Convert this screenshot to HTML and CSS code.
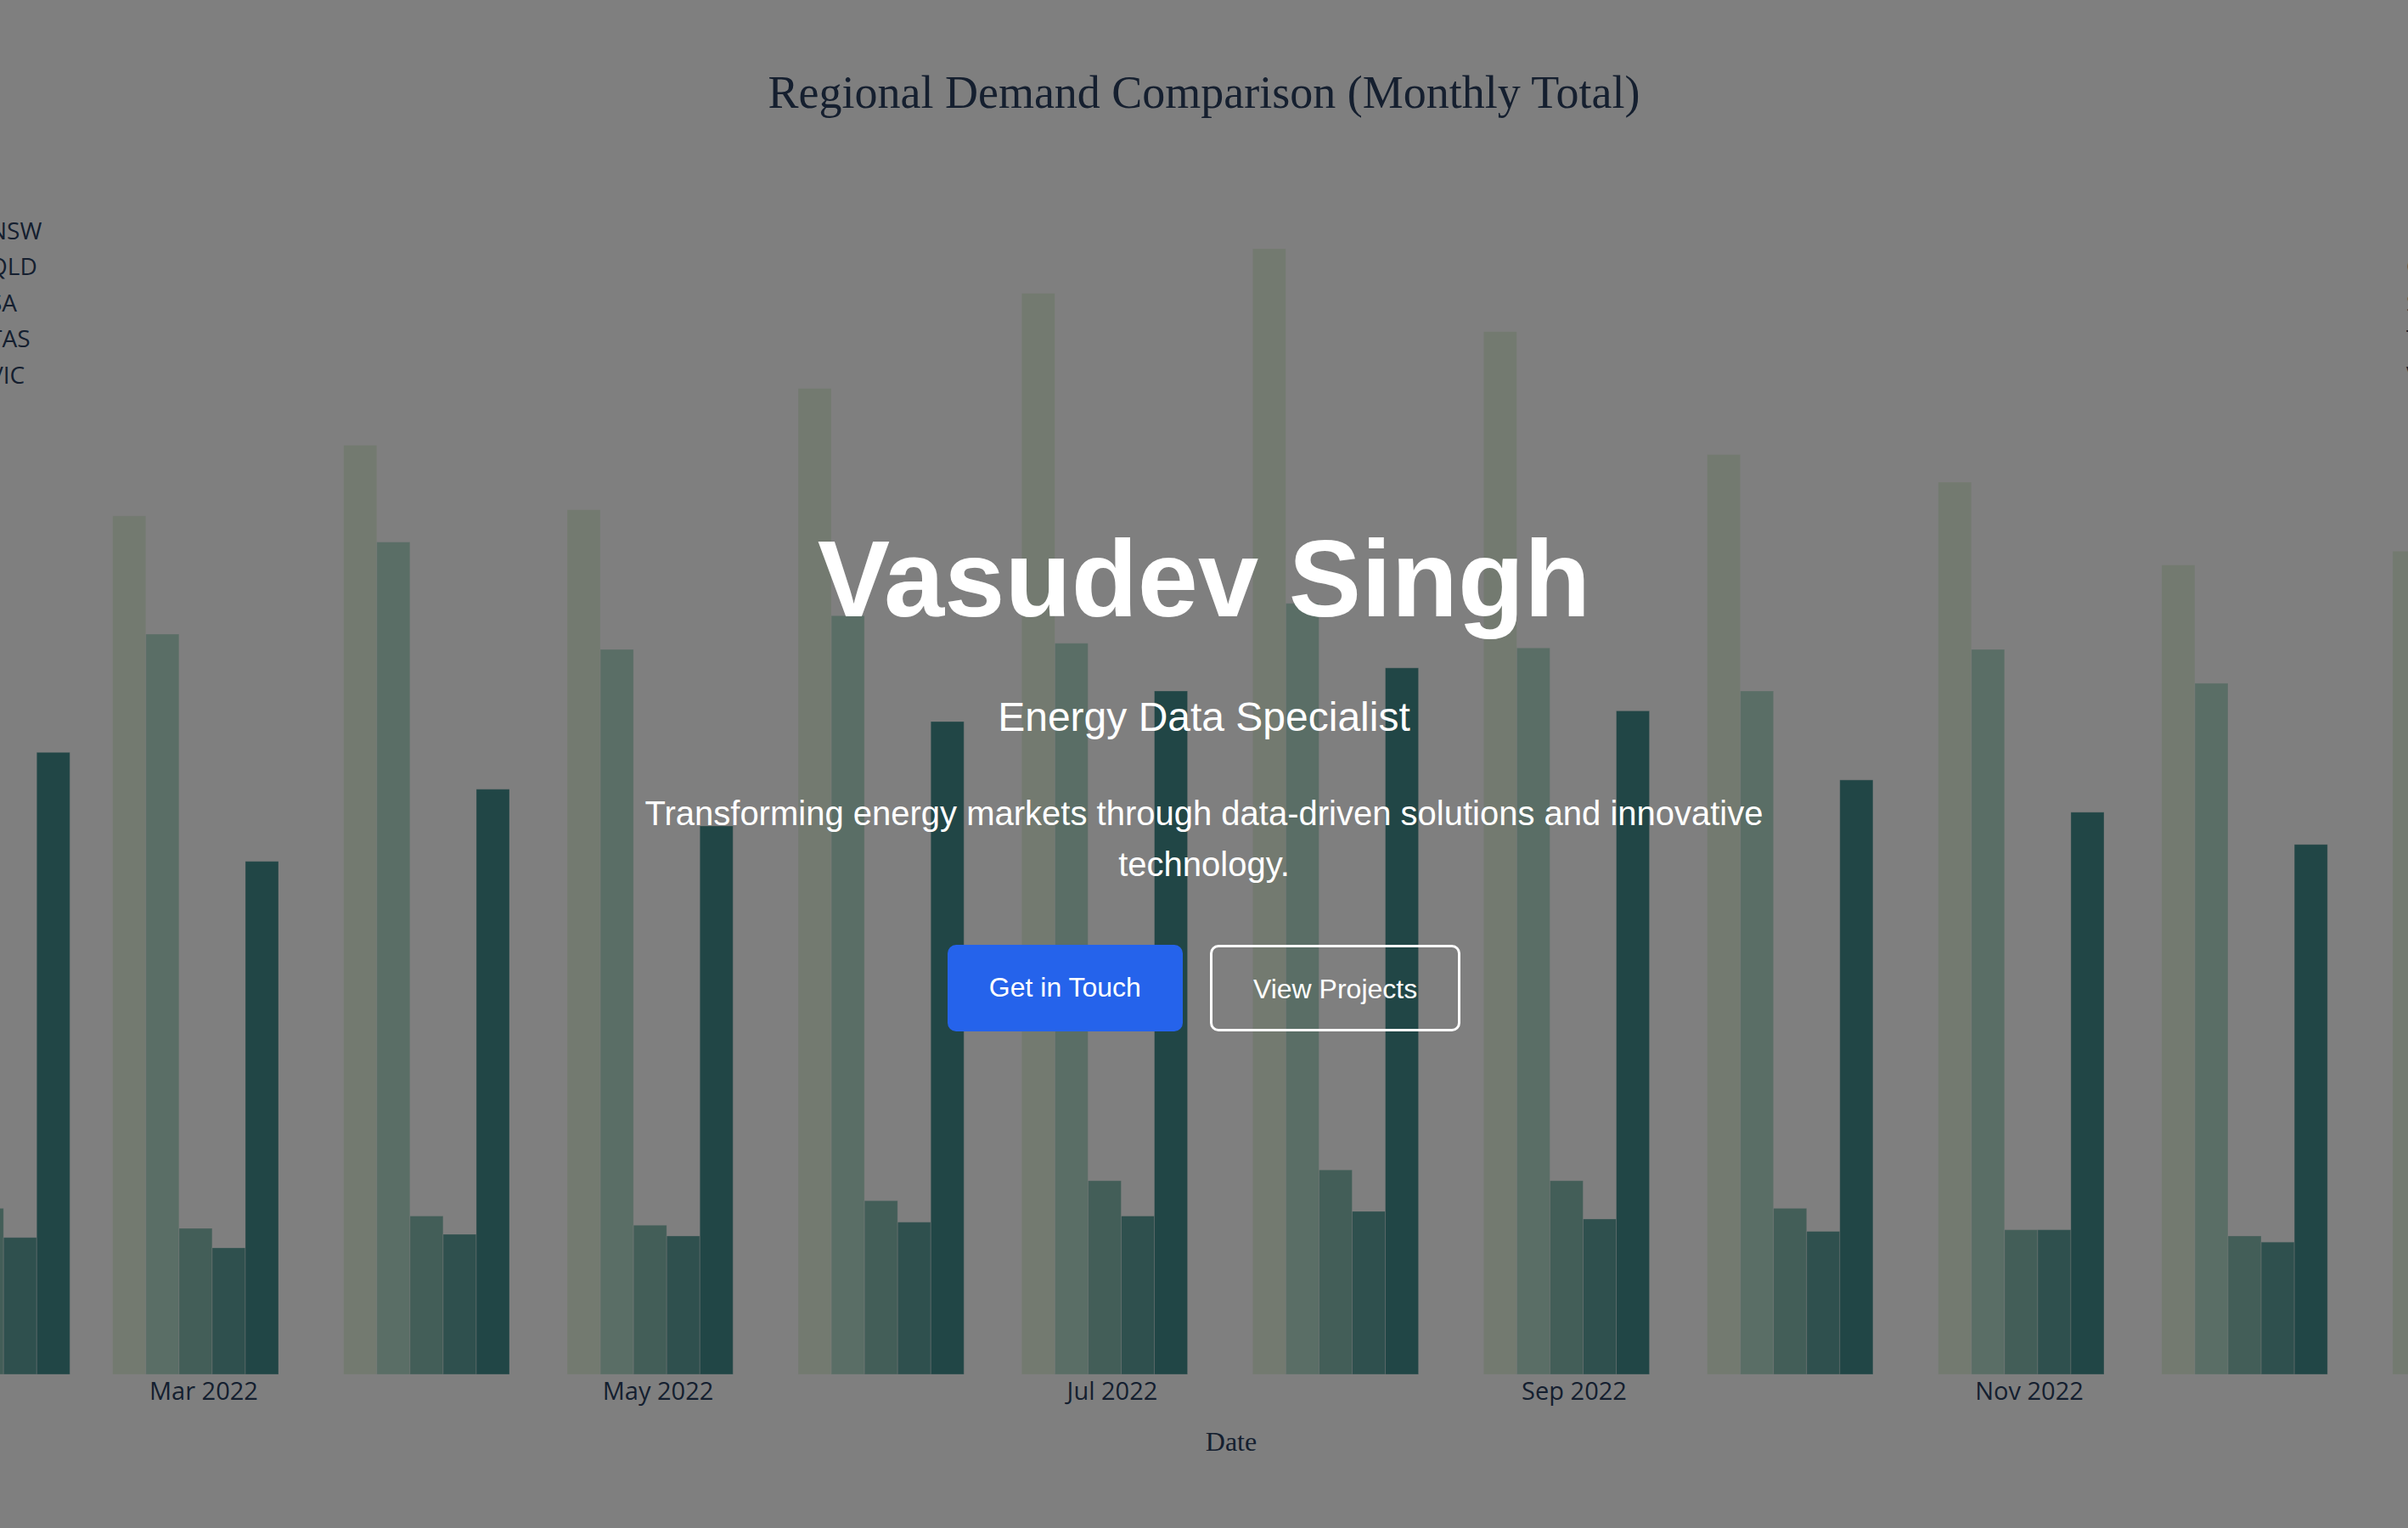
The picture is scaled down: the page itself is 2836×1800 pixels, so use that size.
FILE: index.html
```html
<!DOCTYPE html>
<html lang="en">
<head>
<meta charset="utf-8">
<title>Vasudev Singh</title>
<link rel="stylesheet" href="styles.css">
</head>
<body>
<section class="hero">
  <div class="hero-chart">
    <svg class="chart" width="2836" height="1800" viewBox="0 0 2836 1800" xmlns="http://www.w3.org/2000/svg">
      <text class="chart-title" x="1418" y="127">Regional Demand Comparison (Monthly Total)</text>

      <g class="legend">
        <text x="-13" y="282">NSW</text>
        <text x="-13" y="324">QLD</text>
        <text x="-13" y="367">SA</text>
        <text x="-13" y="409">TAS</text>
        <text x="-13" y="452">VIC</text>
      </g>
      <g class="legend">
        <text x="2834" y="282">NSW</text>
        <text x="2834" y="324">QLD</text>
        <text x="2834" y="367">SA</text>
        <text x="2834" y="409">TAS</text>
        <text x="2834" y="452">VIC</text>
      </g>

      <g class="bars">
        <g transform="translate(-113 0)">
          <rect class="b1" x="0" y="619" width="39.06" height="1000"/>
          <rect class="b2" x="39.06" y="739" width="39.06" height="880"/>
          <rect class="b3" x="78.12" y="1423.4" width="39.06" height="195.6"/>
          <rect class="b4" x="117.18" y="1457.8" width="39.06" height="161.2"/>
          <rect class="b5" x="156.24" y="886.3" width="39.06" height="732.7"/>
        </g>
        <g transform="translate(132.7 0)">
          <rect class="b1" x="0" y="607.7" width="39.06" height="1011.3"/>
          <rect class="b2" x="39.06" y="747" width="39.06" height="872"/>
          <rect class="b3" x="78.12" y="1447" width="39.06" height="172"/>
          <rect class="b4" x="117.18" y="1470" width="39.06" height="149"/>
          <rect class="b5" x="156.24" y="1014.7" width="39.06" height="604.3"/>
        </g>
        <g transform="translate(404.7 0)">
          <rect class="b1" x="0" y="524.5" width="39.06" height="1094.5"/>
          <rect class="b2" x="39.06" y="638.5" width="39.06" height="980.5"/>
          <rect class="b3" x="78.12" y="1432.5" width="39.06" height="186.5"/>
          <rect class="b4" x="117.18" y="1454" width="39.06" height="165"/>
          <rect class="b5" x="156.24" y="929.7" width="39.06" height="689.3"/>
        </g>
        <g transform="translate(668 0)">
          <rect class="b1" x="0" y="600.5" width="39.06" height="1018.5"/>
          <rect class="b2" x="39.06" y="765" width="39.06" height="854"/>
          <rect class="b3" x="78.12" y="1443.3" width="39.06" height="175.7"/>
          <rect class="b4" x="117.18" y="1456" width="39.06" height="163"/>
          <rect class="b5" x="156.24" y="973" width="39.06" height="646"/>
        </g>
        <g transform="translate(940 0)">
          <rect class="b1" x="0" y="457.6" width="39.06" height="1161.4"/>
          <rect class="b2" x="39.06" y="725.3" width="39.06" height="893.7"/>
          <rect class="b3" x="78.12" y="1414.4" width="39.06" height="204.6"/>
          <rect class="b4" x="117.18" y="1439.7" width="39.06" height="179.3"/>
          <rect class="b5" x="156.24" y="850" width="39.06" height="769"/>
        </g>
        <g transform="translate(1203.3 0)">
          <rect class="b1" x="0" y="345.5" width="39.06" height="1273.5"/>
          <rect class="b2" x="39.06" y="757.8" width="39.06" height="861.2"/>
          <rect class="b3" x="78.12" y="1390.9" width="39.06" height="228.1"/>
          <rect class="b4" x="117.18" y="1432.5" width="39.06" height="186.5"/>
          <rect class="b5" x="156.24" y="814" width="39.06" height="805"/>
        </g>
        <g transform="translate(1475.3 0)">
          <rect class="b1" x="0" y="293" width="39.06" height="1326"/>
          <rect class="b2" x="39.06" y="710.8" width="39.06" height="908.2"/>
          <rect class="b3" x="78.12" y="1378.2" width="39.06" height="240.8"/>
          <rect class="b4" x="117.18" y="1427" width="39.06" height="192"/>
          <rect class="b5" x="156.24" y="786.8" width="39.06" height="832.2"/>
        </g>
        <g transform="translate(1747.3 0)">
          <rect class="b1" x="0" y="390.7" width="39.06" height="1228.3"/>
          <rect class="b2" x="39.06" y="763.3" width="39.06" height="855.7"/>
          <rect class="b3" x="78.12" y="1390.9" width="39.06" height="228.1"/>
          <rect class="b4" x="117.18" y="1436" width="39.06" height="183"/>
          <rect class="b5" x="156.24" y="837.4" width="39.06" height="781.6"/>
        </g>
        <g transform="translate(2010.6 0)">
          <rect class="b1" x="0" y="535.4" width="39.06" height="1083.6"/>
          <rect class="b2" x="39.06" y="814" width="39.06" height="805"/>
          <rect class="b3" x="78.12" y="1423.4" width="39.06" height="195.6"/>
          <rect class="b4" x="117.18" y="1450.6" width="39.06" height="168.4"/>
          <rect class="b5" x="156.24" y="918.8" width="39.06" height="700.2"/>
        </g>
        <g transform="translate(2282.7 0)">
          <rect class="b1" x="0" y="568" width="39.06" height="1051"/>
          <rect class="b2" x="39.06" y="765" width="39.06" height="854"/>
          <rect class="b3" x="78.12" y="1448.7" width="39.06" height="170.3"/>
          <rect class="b4" x="117.18" y="1448.7" width="39.06" height="170.3"/>
          <rect class="b5" x="156.24" y="956.8" width="39.06" height="662.2"/>
        </g>
        <g transform="translate(2545.9 0)">
          <rect class="b1" x="0" y="665.6" width="39.06" height="953.4"/>
          <rect class="b2" x="39.06" y="804.9" width="39.06" height="814.1"/>
          <rect class="b3" x="78.12" y="1456" width="39.06" height="163"/>
          <rect class="b4" x="117.18" y="1463.2" width="39.06" height="155.8"/>
          <rect class="b5" x="156.24" y="994.8" width="39.06" height="624.2"/>
        </g>
        <g transform="translate(2817.9 0)">
          <rect class="b1" x="0" y="649.3" width="39.06" height="969.7"/>
          <rect class="b2" x="39.06" y="790" width="39.06" height="829"/>
          <rect class="b3" x="78.12" y="1440" width="39.06" height="179"/>
          <rect class="b4" x="117.18" y="1455" width="39.06" height="164"/>
          <rect class="b5" x="156.24" y="980" width="39.06" height="639"/>
        </g>
      </g>

      <g class="ticks">
        <text x="240" y="1649">Mar 2022</text>
        <text x="775" y="1649">May 2022</text>
        <text x="1310" y="1649">Jul 2022</text>
        <text x="1854" y="1649">Sep 2022</text>
        <text x="2390" y="1649">Nov 2022</text>
      </g>
      <text class="axis-title" x="1450" y="1709">Date</text>
    </svg>
  </div>
  <div class="hero-overlay"></div>
  <div class="hero-content">
    <h1 class="hero-title">Vasudev Singh</h1>
    <p class="hero-subtitle">Energy Data Specialist</p>
    <p class="hero-text">Transforming energy markets through data-driven solutions and innovative technology.</p>
    <div class="hero-actions">
      <a class="btn btn-primary" href="#contact">Get in Touch</a>
      <a class="btn btn-outline" href="#projects">View Projects</a>
    </div>
  </div>
</section>
</body>
</html>
```

FILE: styles.css
```css
* {
  box-sizing: border-box;
}

html,
body {
  margin: 0;
  padding: 0;
}

body {
  font-family: "Liberation Sans", Arial, sans-serif;
  background: #ffffff;
}

.hero {
  position: relative;
  height: 100vh;
  overflow: hidden;
  background: #ffffff;
  display: flex;
  align-items: center;
  justify-content: center;
}

.hero-chart {
  position: absolute;
  inset: 0;
}

.chart {
  display: block;
  overflow: hidden;
}

.chart-title {
  font-family: "Liberation Serif", "Times New Roman", serif;
  font-size: 54px;
  fill: #2a3f5f;
  text-anchor: middle;
}

.legend text {
  font-family: "Open Sans", "DejaVu Sans", sans-serif;
  font-size: 28px;
  fill: #2a3f5f;
}

.bars rect {
  stroke: rgba(255, 255, 255, 0.35);
  stroke-width: 1;
}

.b1 { fill: #e6f4e0; }
.b2 { fill: #b4dccc; }
.b3 { fill: #86bcb0; }
.b4 { fill: #5ea09c; }
.b5 { fill: #428c8c; }

.ticks text {
  font-family: "Open Sans", "DejaVu Sans", sans-serif;
  font-size: 29px;
  fill: #2a3f5f;
  text-anchor: middle;
}

.axis-title {
  font-family: "Liberation Serif", "Times New Roman", serif;
  font-size: 32px;
  fill: #2a3f5f;
  text-anchor: middle;
}

.hero-overlay {
  position: absolute;
  inset: 0;
  background: rgba(0, 0, 0, 0.5);
}

.hero-content {
  position: relative;
  z-index: 1;
  display: flex;
  flex-direction: column;
  align-items: center;
  text-align: center;
  color: #ffffff;
  padding-top: 20px;
}

.hero-title {
  margin: 0 0 51px;
  font-size: 128px;
  line-height: 1.2;
  font-weight: 700;
}

.hero-subtitle {
  margin: 0 0 47px;
  font-size: 48px;
  line-height: 1.5;
}

.hero-text {
  margin: 0 0 65px;
  max-width: 1400px;
  font-size: 40px;
  line-height: 1.5;
}

.hero-actions {
  display: flex;
  gap: 32px;
  align-items: center;
}

.btn {
  display: inline-block;
  font-size: 32px;
  line-height: 36px;
  color: #ffffff;
  text-decoration: none;
  border-radius: 10px;
}

.btn-primary {
  background: #2563eb;
  padding: 32px 49px 34px;
}

.btn-outline {
  border: 3px solid #ffffff;
  padding: 31px 48px 29px;
}
```
